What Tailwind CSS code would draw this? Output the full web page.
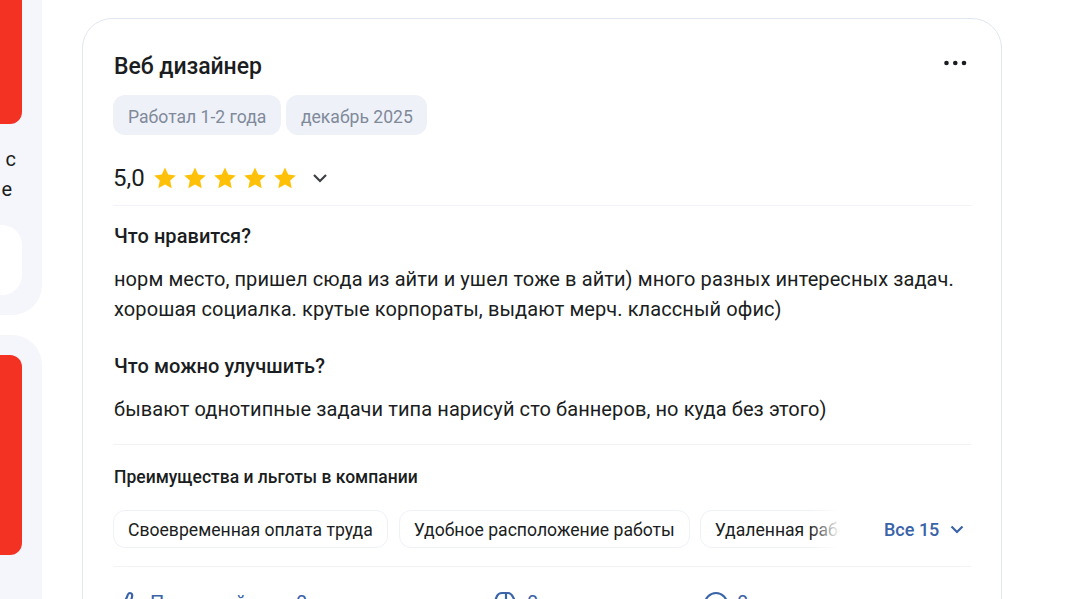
<!DOCTYPE html>
<html lang="ru"><head><meta charset="utf-8">
<script src="https://cdn.jsdelivr.net/npm/@tailwindcss/browser@4"></script>
</head>
<body class="bg-white overflow-hidden">
<div class="flex h-[599px] w-[1083px] overflow-hidden font-['Roboto',sans-serif] text-[#1a1d21]">
  <aside class="w-[42px] shrink-0 flex flex-col gap-5 overflow-hidden">
    <div class="h-[315px] shrink-0 bg-[#f4f6fb] rounded-br-[30px] pr-5 flex flex-col">
      <div class="h-[124px] bg-[#f33224] rounded-br-[12px]"></div>
      <div class="h-[101px] pt-[20px] text-[20px] leading-[30px] text-right whitespace-nowrap">
        <div class="pr-[6px]">с</div><div class="pr-[10px]">е</div>
      </div>
      <div class="h-[70px] bg-white rounded-r-[20px]"></div>
    </div>
    <div class="flex-1 bg-[#f4f6fb] rounded-tr-[30px] pr-5 pt-5">
      <div class="h-[200px] bg-[#f33224] rounded-r-[12px]"></div>
    </div>
  </aside>
  <main class="ml-10 mt-[18px] w-[920px] h-[640px] shrink-0 border border-[#e1e7f0] rounded-[30px] px-[30px] pt-[32px]">
    <div class="flex justify-between items-start">
      <h2 class="pl-px text-[23px] leading-[32px] font-medium tracking-[-0.05px]">Веб дизайнер</h2>
      <svg class="-mt-px mr-[3px]" width="26" height="26" viewBox="0 0 26 26" fill="#1a1d21"><circle cx="4.500" cy="13" r="2.300"/><circle cx="13.300" cy="13" r="2.300"/><circle cx="22" cy="13" r="2.300"/></svg>
    </div>
    <div class="flex gap-[5px] mt-[12px]">
      <span class="h-10 px-[15px] rounded-[12px] bg-[#eef1f8] text-[#808a9a] text-[17.6px] leading-[44px]">Работал 1-2 года</span>
      <span class="h-10 px-[14.500px] rounded-[12px] bg-[#eef1f8] text-[#808a9a] text-[17.6px] leading-[44px]">декабрь 2025</span>
    </div>
    <div class="flex items-center h-[71px] border-b border-[#f1f3f8] pt-[15px]">
      <span class="text-[24px] leading-[30px] mr-[8px]">5,0</span>
      <div class="flex gap-[6px]">
        <svg width="24" height="24" viewBox="0 0 24 24" fill="#ffc107"><path d="M12 1.500l3.200 7 7.600.9-5.600 5.200 1.500 7.600L12 18.400l-6.700 3.800 1.500-7.600L1.200 9.400l7.600-.9z"/></svg>
        <svg width="24" height="24" viewBox="0 0 24 24" fill="#ffc107"><path d="M12 1.500l3.200 7 7.600.9-5.600 5.200 1.500 7.600L12 18.400l-6.700 3.800 1.500-7.600L1.200 9.400l7.600-.9z"/></svg>
        <svg width="24" height="24" viewBox="0 0 24 24" fill="#ffc107"><path d="M12 1.500l3.200 7 7.600.9-5.600 5.200 1.500 7.600L12 18.400l-6.700 3.800 1.500-7.600L1.200 9.400l7.600-.9z"/></svg>
        <svg width="24" height="24" viewBox="0 0 24 24" fill="#ffc107"><path d="M12 1.500l3.200 7 7.600.9-5.600 5.200 1.500 7.600L12 18.400l-6.700 3.800 1.500-7.600L1.200 9.400l7.600-.9z"/></svg>
        <svg width="24" height="24" viewBox="0 0 24 24" fill="#ffc107"><path d="M12 1.500l3.200 7 7.600.9-5.600 5.200 1.500 7.600L12 18.400l-6.700 3.800 1.500-7.600L1.200 9.400l7.600-.9z"/></svg>
      </div>
      <svg class="ml-[12px]" width="22" height="22" viewBox="0 0 22 22" fill="none" stroke="#3c3f44" stroke-width="2.200"><path d="M5 8l6 6 6-6"/></svg>
    </div>
    <div class="pl-px pt-[15px] pb-[20px] border-b border-[#f1f3f8] text-[20px] leading-[30px] tracking-[0.09px]">
      <h3 class="font-medium tracking-[0.05px]">Что нравится?</h3>
      <p class="mt-[13px] whitespace-nowrap">норм место, пришел сюда из айти и ушел тоже в айти) много разных интересных задач.<br>хорошая социалка. крутые корпораты, выдают мерч. классный офис)</p>
      <h3 class="font-medium tracking-[0.05px] mt-[27px]">Что можно улучшить?</h3>
      <p class="mt-[13px] whitespace-nowrap">бывают однотипные задачи типа нарисуй сто баннеров, но куда без этого)</p>
    </div>
    <div class="pl-px pt-[20px] text-[17.5px] leading-[24px] font-medium">Преимущества и льготы в компании</div>
    <div class="flex items-center h-[78px] border-b border-[#f1f3f8] pt-[3px]">
      <div class="relative w-[727px] overflow-hidden flex gap-[11px]">
        <span class="shrink-0 h-[38px] px-[14px] border border-[#eff1f8] rounded-[12px] text-[17.6px] leading-[38px]">Своевременная оплата труда</span>
        <span class="shrink-0 h-[38px] px-[14px] border border-[#eff1f8] rounded-[12px] text-[17.6px] leading-[38px]">Удобное расположение работы</span>
        <span class="shrink-0 -ml-px h-[38px] px-[14px] border border-[#eff1f8] rounded-[12px] text-[17.6px] leading-[38px]">Удаленная работа</span>
        <div class="absolute right-0 top-0 h-full w-[30px] bg-gradient-to-r from-white/0 to-white"></div>
      </div>
      <span class="ml-[44px] text-[18px] font-medium text-[#3a63a8]">Все 15</span>
      <svg class="ml-[8px]" width="20" height="20" viewBox="0 0 20 20" fill="none" stroke="#3a63a8" stroke-width="2.200"><path d="M4.500 7.500l5.500 5.500 5.500-5.500"/></svg>
    </div>
    <div class="flex items-start pt-[24px] pl-[3px] text-[20px] leading-[24px] text-[#3a63a8] whitespace-nowrap">
      <svg class="mr-[8px]" width="26" height="26" viewBox="0 0 26 26" fill="none" stroke="#3a63a8" stroke-width="2.200"><path d="M8 12l3-6c.5-2 1.500-4 3-4 2 0 2.500 2 2 4l-1 4h7l-2 12H8zM8 12H3v10h5"/></svg>
      <span class="w-[146px]">Полезный отзыв</span><span class="w-[197px]">0</span>
      <svg class="mr-[8px]" width="26" height="26" viewBox="0 0 26 26" fill="none" stroke="#3a63a8" stroke-width="2.200"><path d="M2 10l2-5c1-2 3-3 5-3h6c2 0 4 2 5 4l3 6M13 2v10"/></svg>
      <span class="w-[176px]">0</span>
      <svg class="mr-[8px]" width="26" height="26" viewBox="0 0 26 26" fill="none" stroke="#3a63a8" stroke-width="2.200"><circle cx="13" cy="13" r="11"/></svg>
      <span>0</span>
    </div>
  </main>
</div>
</body></html>
